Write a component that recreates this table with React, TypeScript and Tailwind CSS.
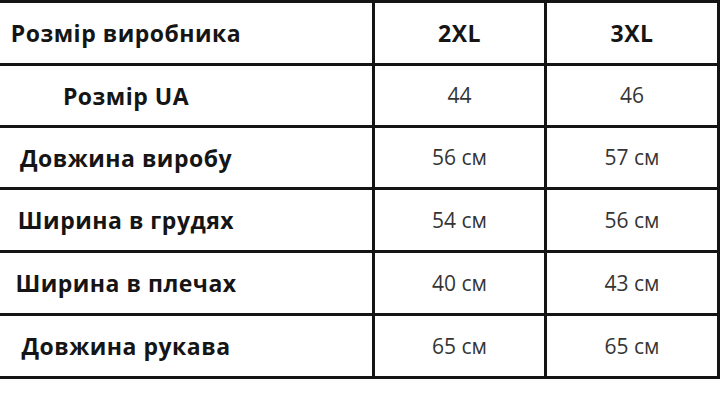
import React from "react";

const rows: { label: string; a: string; b: string; h: string }[] = [
  { label: "Розмір UA", a: "44", b: "46", h: "h-[59px]" },
  { label: "Довжина виробу", a: "56 см", b: "57 см", h: "h-[59px]" },
  { label: "Ширина в грудях", a: "54 см", b: "56 см", h: "h-[60px]" },
  { label: "Ширина в плечах", a: "40 см", b: "43 см", h: "h-[60px]" },
  { label: "Довжина рукава", a: "65 см", b: "65 см", h: "h-[60px]" },
];

export default function App() {
  return (
    <div
      className="w-[720px] h-[407px] bg-white overflow-hidden"
      style={{ fontFamily: '"Open Sans", "Noto Sans", sans-serif' }}
    >
      <div className="flex h-[66px] border-t-[3px] border-b-[3px] border-r-[3px] border-[#141414]">
        <div className="w-[372px] flex items-center">
          <div className="w-[252px] text-center text-[23px] font-bold text-[#151515] tracking-[0.5px]">
            Розмір виробника
          </div>
        </div>
        <div className="w-[172px] border-l-[3px] border-[#141414] flex items-center justify-center text-[23px] font-bold text-[#151515] tracking-[0.5px]">
          2XL
        </div>
        <div className="flex-1 border-l-[3px] border-[#141414] flex items-center justify-center text-[23px] font-bold text-[#151515] tracking-[0.5px]">
          3XL
        </div>
      </div>
      {rows.map((r) => (
        <div
          key={r.label}
          className={`flex ${r.h} box-content border-b-[3px] border-r-[3px] border-[#141414]`}
        >
          <div className="w-[372px] flex items-center pt-[1px]">
            <div className="w-[252px] text-center text-[23px] font-bold text-[#151515] tracking-[0.5px]">
              {r.label}
            </div>
          </div>
          <div className="w-[172px] border-l-[3px] border-[#141414] flex items-center justify-center pt-[1px] text-[21px] text-[#353535]">
            {r.a}
          </div>
          <div className="flex-1 border-l-[3px] border-[#141414] flex items-center justify-center pt-[1px] text-[21px] text-[#353535]">
            {r.b}
          </div>
        </div>
      ))}
    </div>
  );
}
